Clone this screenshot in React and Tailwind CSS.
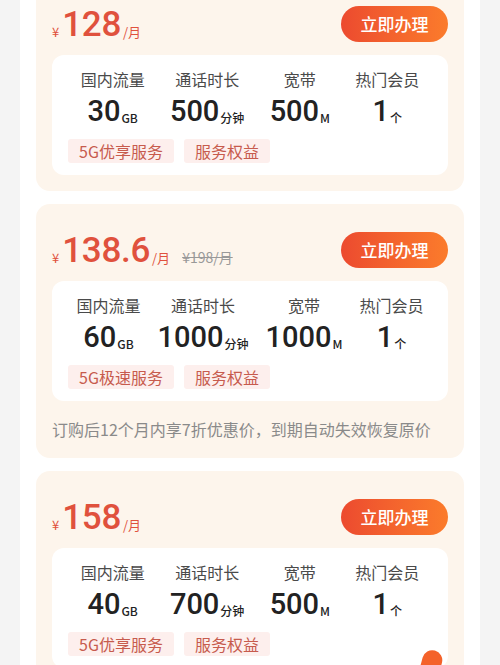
import React from 'react';

const plans = [
  {
    price: '128',
    stats: [
      { label: '国内流量', value: '30', unit: 'GB' },
      { label: '通话时长', value: '500', unit: '分钟' },
      { label: '宽带', value: '500', unit: 'M' },
      { label: '热门会员', value: '1', unit: '个' },
    ],
    tags: ['5G优享服务', '服务权益'],
  },
  {
    price: '138.6',
    original: '¥198/月',
    stats: [
      { label: '国内流量', value: '60', unit: 'GB' },
      { label: '通话时长', value: '1000', unit: '分钟' },
      { label: '宽带', value: '1000', unit: 'M' },
      { label: '热门会员', value: '1', unit: '个' },
    ],
    tags: ['5G极速服务', '服务权益'],
    note: '订购后12个月内享7折优惠价，到期自动失效恢复原价',
  },
  {
    price: '158',
    stats: [
      { label: '国内流量', value: '40', unit: 'GB' },
      { label: '通话时长', value: '700', unit: '分钟' },
      { label: '宽带', value: '500', unit: 'M' },
      { label: '热门会员', value: '1', unit: '个' },
    ],
    tags: ['5G优享服务', '服务权益'],
  },
];

const digits = { fontFamily: 'Roboto, "Noto Sans CJK SC", sans-serif' };

const PlanCard = ({ plan }) => (
  <div className="bg-[#fdf5ec] rounded-[14px] px-4 pt-7 pb-4">
    <div className="flex items-center justify-between h-9">
      <div className="flex items-end text-[#e0513d] leading-none">
        <span className="text-[13px] mb-[4px] mr-[3px]">¥</span>
        <span className="text-[35px] font-medium tracking-[-0.3px]" style={digits}>{plan.price}</span>
        <span className="text-[13px] mb-[4px] ml-[2px]">/月</span>
        {plan.original && (
          <span className="text-[14px] mb-[4px] ml-3 text-[#999] line-through">{plan.original}</span>
        )}
      </div>
      <button className="w-[107px] h-9 rounded-full bg-gradient-to-r from-[#ec4a2f] to-[#fb7b2b] text-white text-[17px] font-medium">
        立即办理
      </button>
    </div>
    <div className="mt-[13px] bg-white rounded-[12px] px-4 pt-[13px] h-[120px]">
      <div className="flex justify-around">
        {plan.stats.map((s) => (
          <div key={s.label} className="flex flex-col items-center">
            <span className="text-[16px] text-[#4a4a4a] leading-[22px]">{s.label}</span>
            <span className="mt-[7px] flex items-end leading-none text-[#222]">
              <span className="text-[29px] font-medium" style={digits}>{s.value}</span>
              <span className="text-[12px] font-medium mb-[2px] ml-[1px]">{s.unit}</span>
            </span>
          </div>
        ))}
      </div>
      <div className="flex gap-[10px] mt-[13px]">
        {plan.tags.map((t) => (
          <span key={t} className="bg-[#fdefed] text-[#c75b4d] text-[16px] leading-[24px] px-[11px] rounded-[3px]">
            {t}
          </span>
        ))}
      </div>
    </div>
    {plan.note && (
      <p className="mt-[17px] mb-[2px] text-[16px] text-[#8a8a8a] leading-[22px] whitespace-nowrap">{plan.note}</p>
    )}
  </div>
);

export default function App() {
  return (
    <div
      className="relative w-[500px] h-[665px] overflow-hidden bg-[#f4f4f4]"
      style={{ fontFamily: '"Noto Sans CJK SC", "Noto Sans", sans-serif' }}
    >
      <div className="mx-5 bg-white h-[720px] px-4 flex flex-col gap-[13px] -mt-[22px]">
        {plans.map((p, i) => (
          <PlanCard key={i} plan={p} />
        ))}
      </div>
      <div className="absolute left-[421px] top-[650px] w-[20px] h-[30px] bg-[#f4622a] rounded-t-full rotate-[15deg]" />
    </div>
  );
}
